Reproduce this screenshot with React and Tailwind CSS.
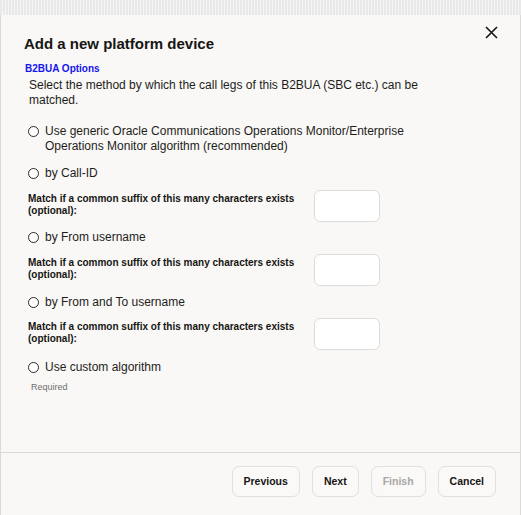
import React from "react";

const Radio = ({ children }) => (
  <label className="flex items-start gap-[6px] pl-[4px] text-[12px] leading-[15px] text-[#1d1d1b]">
    <span className="mt-[2px] w-[11px] h-[11px] shrink-0 rounded-full border border-[#2a2a2a] bg-white" />
    <span className="max-w-[370px]">{children}</span>
  </label>
);

const SuffixRow = () => (
  <div className="flex items-start pl-[4px]">
    <div className="w-[280px] pt-[3px] text-[10px] leading-[12px] font-bold text-[#161513]">
      Match if a common suffix of this many characters exists (optional):
    </div>
    <input
      type="text"
      className="ml-[6px] w-[66px] h-[32px] rounded-[6px] border border-[#dedcd9] bg-white outline-none"
    />
  </div>
);

const Btn = ({ children, disabled }) => (
  <button
    className={`h-[31px] px-[11px] rounded-[7px] border border-[#e2e0dd] bg-[#faf9f8] text-[10.5px] font-bold ${
      disabled ? "text-[#a8a7a5]" : "text-[#161513]"
    }`}
  >
    {children}
  </button>
);

export default function App() {
  return (
    <div className="w-[521px] h-[515px] pt-[15px] bg-[repeating-linear-gradient(90deg,#e9e9e9_0_2px,#f5f5f5_2px_3px)] font-['Liberation_Sans',Arial,sans-serif]">
      <div className="relative h-[500px] flex flex-col bg-[#f9f8f6] border-x border-[#dcdad7]">
        <button className="absolute right-[22px] top-[11px] text-[#161513]">
          <svg width="13" height="13" viewBox="0 0 13 13" fill="none" stroke="currentColor" strokeWidth="1.6">
            <path d="M1 1 L12 12 M12 1 L1 12" />
          </svg>
        </button>
        <div className="flex-1 px-[23px] pt-[19px]">
          <h2 className="text-[15px] leading-[20px] font-bold text-[#161513]">Add a new platform device</h2>
          <div className="mt-[8px] pl-[1px] text-[10px] leading-[14px] font-bold text-[#1515f0]">B2BUA Options</div>
          <p className="mt-[2px] pl-[5px] pr-[60px] text-[12px] leading-[15px] text-[#1d1d1b]">
            Select the method by which the call legs of this B2BUA (SBC etc.) can be matched.
          </p>
          <div className="mt-[16px] flex flex-col">
            <Radio>
              Use generic Oracle Communications Operations Monitor/Enterprise Operations Monitor algorithm
              (recommended)
            </Radio>
            <div className="mt-[12px]">
              <Radio>by Call-ID</Radio>
            </div>
            <div className="mt-[9px]">
              <SuffixRow />
            </div>
            <div className="mt-[8px]">
              <Radio>by From username</Radio>
            </div>
            <div className="mt-[9px]">
              <SuffixRow />
            </div>
            <div className="mt-[9px]">
              <Radio>by From and To username</Radio>
            </div>
            <div className="mt-[8px]">
              <SuffixRow />
            </div>
            <div className="mt-[10px]">
              <Radio>Use custom algorithm</Radio>
            </div>
            <div className="mt-[7px] pl-[7px] text-[9px] leading-[11px] text-[#6f6e6c]">Required</div>
          </div>
        </div>
        <div className="h-[63px] border-t border-[#dcdad7] flex items-start justify-end gap-[12px] pt-[13px] pr-[24px]">
          <Btn>Previous</Btn>
          <Btn>Next</Btn>
          <Btn disabled>Finish</Btn>
          <Btn>Cancel</Btn>
        </div>
      </div>
    </div>
  );
}
